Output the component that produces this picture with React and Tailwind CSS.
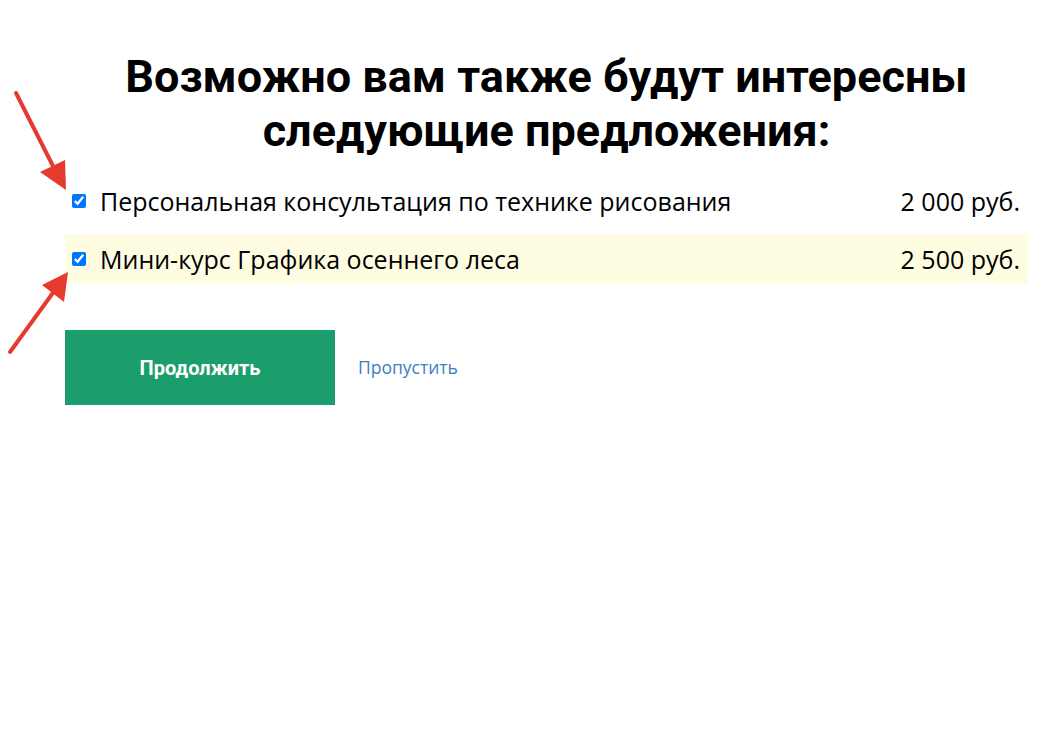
export default function App() {
  const items = [
    { id: 1, title: "Персональная консультация по технике рисования", price: "2 000 руб.", highlight: false },
    { id: 2, title: "Мини-курс Графика осеннего леса", price: "2 500 руб.", highlight: true },
  ];

  return (
    <div className="relative min-h-[730px] bg-white font-['Open_Sans',sans-serif] text-black">
      <div className="ml-[65px] w-[963px] pt-[50px]">
        <h1 className="text-center font-['Roboto',sans-serif] text-[45px] font-bold leading-[54px]">
          Возможно вам также будут интересны
          <br />
          следующие предложения:
        </h1>

        <div className="mt-[18px] flex flex-col gap-[8px]">
          {items.map(item => (
            <label
              key={item.id}
              className={`flex h-[50px] items-center pl-[7px] pr-[8px] ${item.highlight ? "bg-[#fefde1]" : ""}`}
            >
              <input type="checkbox" defaultChecked className="m-0 h-[14px] w-[14px]" />
              <span className="ml-[14px] flex-1 pt-[2px] text-[25px]">{item.title}</span>
              <span className="pt-[2px] text-[25px]">{item.price}</span>
            </label>
          ))}
        </div>

        <div className="mt-[46px] flex items-center">
          <button className="h-[75px] w-[270px] bg-[#1b9e6b] font-['Roboto',sans-serif] text-[20px] font-bold text-white">
            Продолжить
          </button>
          <a href="#" className="ml-[23px] text-[17.5px] text-[#3f7cc4]">
            Пропустить
          </a>
        </div>
      </div>

      {/* annotation arrows */}
      <svg className="pointer-events-none absolute left-0 top-0" width="120" height="400">
        <line x1="16" y1="93" x2="55" y2="170" stroke="#e53b2f" strokeWidth="4" strokeLinecap="round" />
        <polygon points="40,172 65,160 66,190" fill="#e53b2f" />
        <line x1="10" y1="352" x2="55" y2="290" stroke="#e53b2f" strokeWidth="4" strokeLinecap="round" />
        <polygon points="42,285 64,302 68,272" fill="#e53b2f" />
      </svg>
    </div>
  );
}
